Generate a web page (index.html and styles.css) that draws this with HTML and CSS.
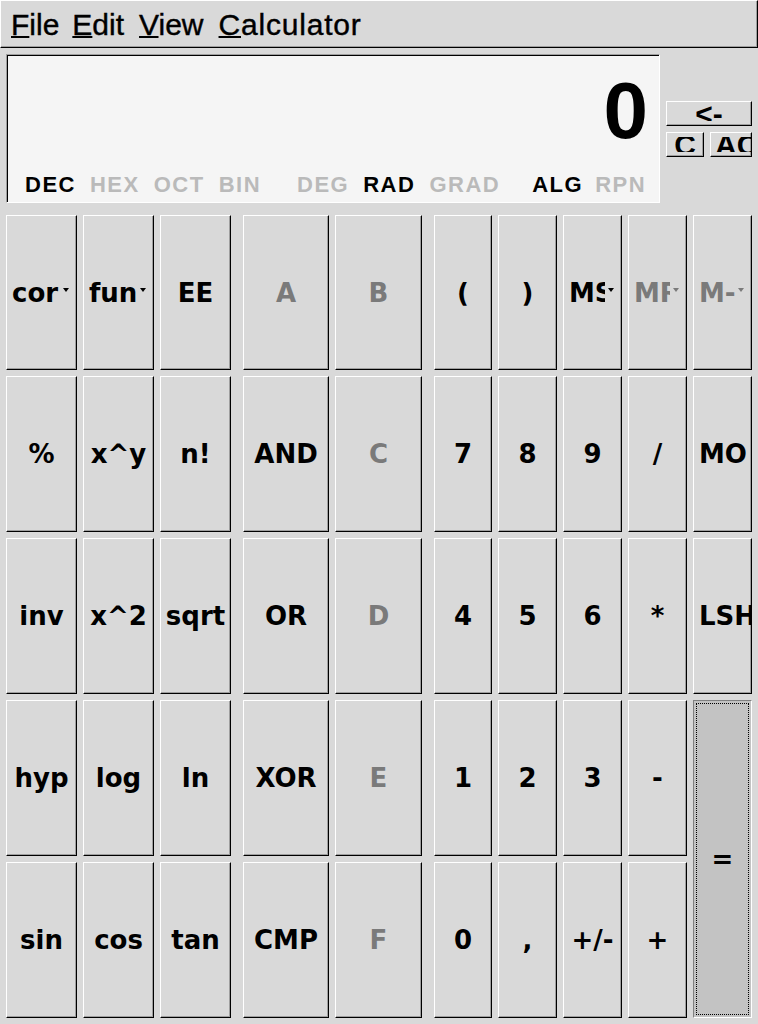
FILE: index.html
```html
<!DOCTYPE html>
<html>
<head>
<meta charset="utf-8">
<title>Calculator</title>
<link rel="stylesheet" href="styles.css">
</head>
<body>
<div class="menubar">
  <span class="menu"><u>F</u>ile</span>
  <span class="menu"><u>E</u>dit</span>
  <span class="menu"><u>V</u>iew</span>
  <span class="menu"><u>C</u>alculator</span>
</div>

<div class="top">
  <div class="display">
    <div class="value">0</div>
    <div class="modes">
      <div class="mgroup base">
        <span class="mode on">DEC</span>
        <span class="mode">HEX</span>
        <span class="mode">OCT</span>
        <span class="mode">BIN</span>
      </div>
      <div class="mgroup angle">
        <span class="mode">DEG</span>
        <span class="mode on">RAD</span>
        <span class="mode">GRAD</span>
      </div>
      <div class="mgroup entry">
        <span class="mode on">ALG</span>
        <span class="mode">RPN</span>
      </div>
    </div>
  </div>
  <div class="side">
    <div class="sbtn wide"><span class="slbl">&lt;-</span></div>
    <div class="srow">
      <div class="sbtn"><span class="slbl">C</span></div>
      <div class="sbtn lft"><span class="slbl">AC</span></div>
    </div>
  </div>
</div>

<div class="keypad">
  <div class="group g1">
    <div class="key mb"><span class="lbl">cor</span><span class="tri"></span></div>
    <div class="key mb"><span class="lbl">fun</span><span class="tri"></span></div>
    <div class="key">EE</div>
    <div class="key">%</div>
    <div class="key">x^y</div>
    <div class="key">n!</div>
    <div class="key">inv</div>
    <div class="key">x^2</div>
    <div class="key">sqrt</div>
    <div class="key">hyp</div>
    <div class="key">log</div>
    <div class="key">ln</div>
    <div class="key">sin</div>
    <div class="key">cos</div>
    <div class="key">tan</div>
  </div>
  <div class="group g2">
    <div class="key dis">A</div>
    <div class="key dis">B</div>
    <div class="key">AND</div>
    <div class="key dis">C</div>
    <div class="key">OR</div>
    <div class="key dis">D</div>
    <div class="key">XOR</div>
    <div class="key dis">E</div>
    <div class="key">CMP</div>
    <div class="key dis">F</div>
  </div>
  <div class="group g3">
    <div class="key">(</div>
    <div class="key">)</div>
    <div class="key mb"><span class="lbl">MS</span><span class="tri"></span></div>
    <div class="key mb dis"><span class="lbl">MR</span><span class="tri"></span></div>
    <div class="key mb dis"><span class="lbl">M-</span><span class="tri"></span></div>
    <div class="key">7</div>
    <div class="key">8</div>
    <div class="key">9</div>
    <div class="key">/</div>
    <div class="key left">MO</div>
    <div class="key">4</div>
    <div class="key">5</div>
    <div class="key">6</div>
    <div class="key">*</div>
    <div class="key left">LSH</div>
    <div class="key">1</div>
    <div class="key">2</div>
    <div class="key">3</div>
    <div class="key">-</div>
    <div class="key eq">=</div>
    <div class="key">0</div>
    <div class="key">,</div>
    <div class="key">+/-</div>
    <div class="key">+</div>
  </div>
</div>
</body>
</html>
```

FILE: styles.css
```css
html, body {
  margin: 0;
  padding: 0;
}
body {
  width: 758px;
  height: 1024px;
  overflow: hidden;
  background: #d9d9d9;
  font-family: "DejaVu Sans", sans-serif;
  color: #000;
}

/* menu bar */
.menubar {
  box-sizing: border-box;
  height: 48px;
  display: flex;
  padding: 7px 0 0 3px;
  border-top: 1px solid #fff;
  border-left: 1px solid #fff;
  border-bottom: 1px solid #000;
  border-right: 1px solid #000;
  box-shadow: inset -1px -1px 0 #9e9e9e;
  font: 30px/34px "Liberation Sans", Arial, sans-serif;
  -webkit-text-stroke: 0.4px #000;
}
.menu {
  padding: 0 7px;
}
.menu + .menu {
  margin-left: -1px;
}
.menu:nth-child(3),
.menu:nth-child(4) {
  margin-left: 1px;
}
.menu:nth-child(4) {
  letter-spacing: 0.8px;
}
.menu u {
  text-decoration-thickness: 2px;
  text-underline-offset: 1px;
}

/* top area */
.top {
  display: flex;
  align-items: center;
  gap: 6px;
  padding: 6px 0 0 6px;
}
.display {
  box-sizing: border-box;
  width: 654px;
  height: 149px;
  display: flex;
  flex-direction: column;
  background: #f5f5f5;
  border: 1px solid;
  border-color: #9e9e9e #fff #fff #9e9e9e;
  box-shadow: inset 1px 1px 0 #000;
}
.value {
  margin-top: 16px;
  padding-right: 11px;
  text-align: right;
  font: bold 80px/80px "Liberation Sans", Arial, sans-serif;
}
.modes {
  margin-top: auto;
  display: flex;
  padding: 0 0 6px 18px;
  font: bold 22px/22px "Liberation Sans", Arial, sans-serif;
  letter-spacing: 1.5px;
}
.mgroup {
  display: flex;
  gap: 14px;
}
.mgroup.angle {
  margin-left: 36px;
}
.mgroup.entry {
  margin-left: 32px;
  gap: 12px;
}
.mode {
  color: #bababa;
}
.mode.on {
  color: #000;
}

.side {
  width: 86px;
  display: flex;
  flex-direction: column;
  gap: 6px;
}
.srow {
  display: flex;
  gap: 6px;
}
.sbtn {
  box-sizing: border-box;
  height: 25px;
  display: flex;
  align-items: center;
  justify-content: center;
  overflow: hidden;
  background: #d9d9d9;
  border: 1px solid;
  border-color: #fff #000 #000 #fff;
  box-shadow: inset -1px -1px 0 #9e9e9e;
  font: bold 30px "Liberation Sans", Arial, sans-serif;
}
.sbtn.lft {
  justify-content: flex-start;
  padding-left: 4px;
}
.srow .sbtn {
  flex: 1 1 0;
  min-width: 0;
}
.slbl {
  display: block;
  height: 15px;
  line-height: 15px;
  overflow: hidden;
  white-space: nowrap;
  flex: none;
}

/* keypad */
.keypad {
  display: flex;
  gap: 12px;
  margin-top: 12px;
  padding-left: 6px;
  height: 803px;
}
.group {
  display: grid;
  grid-template-rows: 155px 156px 156px 156px 156px;
  gap: 6px;
}
.g1 {
  width: 225px;
  grid-template-columns: 71px 71px 71px;
}
.g2 {
  width: 179px;
  grid-template-columns: 86px 87px;
}
.g3 {
  width: 318px;
  grid-template-columns: 58px 59px 59px 59px 59px;
}
.key {
  box-sizing: border-box;
  min-width: 0;
  display: flex;
  align-items: center;
  justify-content: center;
  overflow: hidden;
  white-space: nowrap;
  background: #d9d9d9;
  border: 1px solid;
  border-color: #fff #000 #000 #fff;
  box-shadow: inset -1px -1px 0 #9e9e9e;
  font-size: 26px;
  font-weight: bold;
}
.key.dis {
  color: #7a7a7a;
}
.key.left {
  justify-content: flex-start;
  padding-left: 5px;
}
.key.mb {
  justify-content: flex-start;
  padding: 0 7px 0 5px;
}
.lbl {
  flex: 1 1 auto;
  min-width: 0;
  overflow: hidden;
}
.tri {
  flex: none;
  width: 0;
  height: 0;
  margin: 0 0 6px 3px;
  border-left: 3.5px solid transparent;
  border-right: 3.5px solid transparent;
  border-top: 4px solid currentColor;
}
.key.eq {
  grid-row: span 2;
  background: #c3c3c3;
  border-color: #808080 #fff #fff #808080;
  box-shadow: none;
  outline: 1px dotted #000;
  outline-offset: -4px;
}
```
